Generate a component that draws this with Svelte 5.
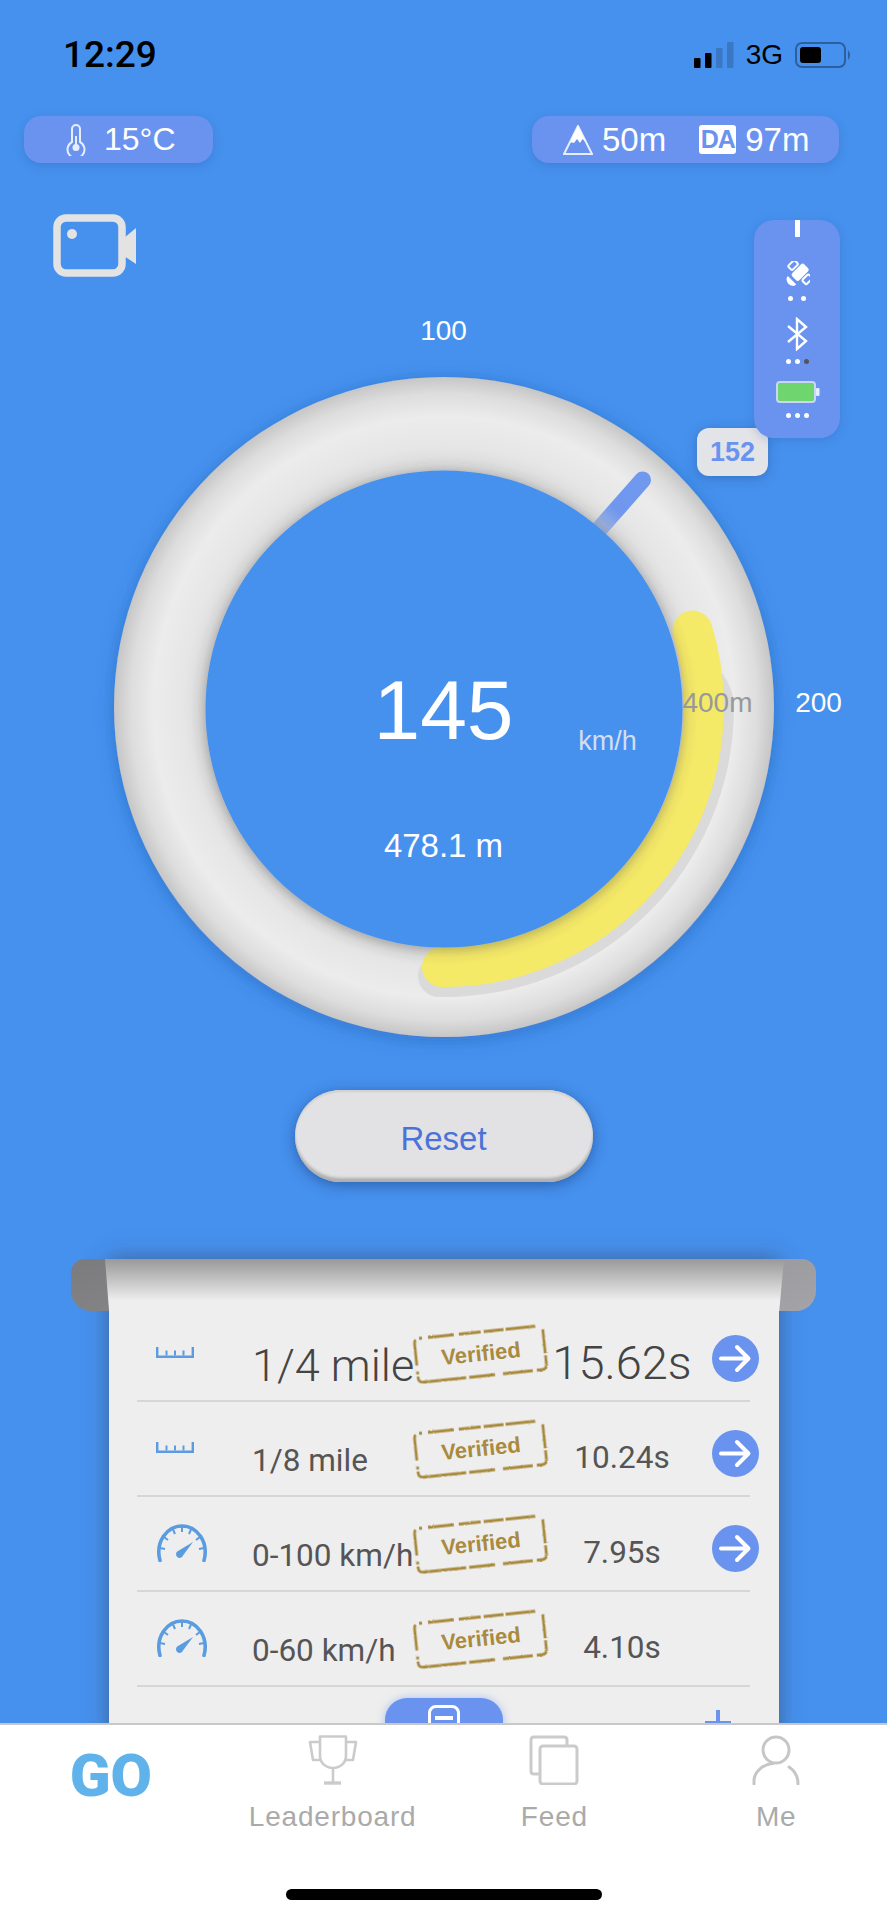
<script>
  const rows = [
    { icon: 'ruler', label: '1/4 mile', time: '15.62s', arrow: true, big: true },
    { icon: 'ruler', label: '1/8 mile', time: '10.24s', arrow: true },
    { icon: 'gauge', label: '0-100 km/h', time: '7.95s', arrow: true },
    { icon: 'gauge', label: '0-60 km/h', time: '4.10s', arrow: false }
  ];
  const ticks = [[4,24,9,25],[8,13,12,16],[17,5.5,19,10],[26,3,26,8],[35,5.5,33,10],[44,13,40,16],[48,24,43,25]];
</script>

<svg class="defs" width="0" height="0" aria-hidden="true">
  <defs>
    <filter id="rough" x="-5%" y="-10%" width="110%" height="120%">
      <feTurbulence type="fractalNoise" baseFrequency="0.5" numOctaves="2" seed="4" result="n" />
      <feDisplacementMap in="SourceGraphic" in2="n" scale="2.2" />
    </filter>
  </defs>
</svg>

<div class="screen">
  <div class="main">
    <header class="status">
      <span class="clock">12:29</span>
      <div class="status-right">
        <svg class="signal" width="40" height="26" viewBox="0 0 40 26">
          <rect x="0" y="16" width="6.5" height="10" rx="1" fill="#000" />
          <rect x="11" y="11" width="6.5" height="15" rx="1" fill="#000" />
          <rect x="22" y="6" width="6.5" height="20" rx="1" fill="#3a78c4" />
          <rect x="33" y="0" width="6.5" height="26" rx="1" fill="#3a78c4" />
        </svg>
        <span class="net">3G</span>
        <svg width="57" height="26" viewBox="0 0 57 26">
          <rect x="1" y="1" width="49" height="24" rx="6" fill="none" stroke="#2c5f9e" stroke-width="2" />
          <rect x="5" y="5" width="21" height="16" rx="3" fill="#000" />
          <path d="M53 8 q4 5 0 10z" fill="#2c5f9e" />
        </svg>
      </div>
    </header>

    <div class="topbar">
      <div class="pill temp">
        <svg width="22" height="32" viewBox="0 0 22 32" fill="none" stroke="#e6edfd" stroke-width="2">
          <path d="M7 18 V5 a4 4 0 0 1 8 0 V18 a8.5 8.5 0 1 1 -8 0z" />
          <circle cx="11" cy="23.5" r="3.5" fill="#e6edfd" stroke="none" />
          <path d="M11 12 V22" />
        </svg>
        <span>15°C</span>
      </div>
      <div class="pill alt">
        <svg width="30" height="30" viewBox="0 0 30 30">
          <path d="M15 1 L29 29 H1z" fill="none" stroke="#e6edfd" stroke-width="2" />
          <path d="M15 1 L23 17 L19.5 14 L17 18 L14 14 L11 18 L7 17z" fill="#fff" />
        </svg>
        <span>50m</span>
        <span class="da">DA</span>
        <span>97m</span>
      </div>
    </div>

    <section class="stage">
      <svg class="camera" width="84" height="64" viewBox="0 0 84 64">
        <rect x="4" y="4" width="65" height="55" rx="9" fill="none" stroke="#e3e3e3" stroke-width="7.5" />
        <circle cx="19" cy="20" r="5" fill="#e3e3e3" />
        <path d="M71 24 L83 14 V50 L71 42z" fill="#e3e3e3" />
      </svg>

      <aside class="panel">
        <i class="tick"></i>
        <svg class="sat" width="26" height="26" viewBox="0 0 26 26">
          <g transform="rotate(45 13 13)" fill="#fff">
            <rect x="9" y="1" width="10" height="17" rx="2.5" />
            <rect x="1" y="5" width="6" height="9" rx="1.5" fill="none" stroke="#fff" stroke-width="2" />
            <rect x="21" y="5" width="6" height="9" rx="1.5" fill="none" stroke="#fff" stroke-width="2" />
            <path d="M8 21 h12 a6 5 0 0 1 -12 0z" />
          </g>
        </svg>
        <div class="dots two"><b></b><b></b></div>
        <svg class="bt" width="22" height="34" viewBox="0 0 22 34" fill="none" stroke="#fff" stroke-width="2.4">
          <path d="M2 9 L20 24 L11 32 V2 L20 10 L2 25" />
        </svg>
        <div class="dots btd"><b></b><b></b><b class="off"></b></div>
        <svg class="batt" width="44" height="22" viewBox="0 0 44 22">
          <rect x="1" y="1" width="38" height="20" rx="3" fill="#6fd66f" stroke="#c9d6f7" stroke-width="2" />
          <rect x="40" y="7" width="3.5" height="8" rx="1" fill="#e6edfd" />
        </svg>
        <div class="dots bad"><b></b><b></b><b></b></div>
      </aside>

      <div class="badge">152</div>

      <div class="gauge">
        <svg width="680" height="680" viewBox="0 0 680 680">
          <defs>
            <radialGradient id="ring" gradientUnits="userSpaceOnUse" cx="340" cy="340" r="330">
              <stop offset="0.72" stop-color="#d8d8d8" />
              <stop offset="0.79" stop-color="#e6e6e6" />
              <stop offset="0.88" stop-color="#ececec" />
              <stop offset="0.95" stop-color="#dddddd" />
              <stop offset="1" stop-color="#c6c6c6" />
            </radialGradient>
            <linearGradient id="needle" gradientUnits="userSpaceOnUse" x1="491" y1="167" x2="538" y2="113">
              <stop offset="0" stop-color="#b4bfd6" />
              <stop offset="0.45" stop-color="#6f97ee" />
              <stop offset="1" stop-color="#7098ee" />
            </linearGradient>
            <filter id="outer" x="-10%" y="-10%" width="120%" height="120%">
              <feDropShadow dx="0" dy="3" stdDeviation="9" flood-color="#1d4c9a" flood-opacity="0.4" />
            </filter>
            <filter id="inner" x="-10%" y="-10%" width="120%" height="120%">
              <feDropShadow dx="0" dy="2" stdDeviation="7" flood-color="#444" flood-opacity="0.45" />
            </filter>
          </defs>
          <circle cx="340" cy="340" r="330" fill="url(#ring)" filter="url(#outer)" />
          <path d="M618 306 Q630 322 630 340 A290 290 0 0 1 335 630 A21 21 0 0 1 335 588 L500 400z" fill="#dadada" />
          <path d="M588.5 263.6 A260 260 0 0 1 338 600" fill="none" stroke="#f5e968" stroke-width="40" stroke-linecap="round" />
          <line x1="491" y1="167" x2="538.5" y2="113" stroke="url(#needle)" stroke-width="17" stroke-linecap="round" />
          <circle cx="340" cy="342" r="238.5" fill="#4691ee" filter="url(#inner)" />
        </svg>
        <span class="mark m100">100</span>
        <span class="mark m200">200</span>
        <span class="m400">400m</span>
        <span class="speed">145</span>
        <span class="unit">km/h</span>
        <span class="dist">478.1 m</span>
      </div>

      <button class="reset"><span>Reset</span></button>
    </section>

    <section class="sheet">
      <div class="roll"></div>
      <div class="paper">
        <div class="curl"></div>
        <div class="rows">
          {#each rows as r}
            <div class="row" class:big={r.big}>
              <div class="ic">
                {#if r.icon === 'ruler'}
                  <svg width="38" height="11" viewBox="0 0 38 11" fill="#5b9be0">
                    <path d="M0 0 H2.4 V8.4 H35.6 V0 H38 V11 H0z" />
                    <rect x="9.5" y="3.5" width="2" height="5" />
                    <rect x="18" y="3.5" width="2" height="5" />
                    <rect x="26.5" y="3.5" width="2" height="5" />
                  </svg>
                {:else}
                  <svg width="52" height="38" viewBox="0 0 52 38" fill="none" stroke="#5b9be0">
                    <path d="M4 36.5 C-1 18 11 2 26 2 C41 2 53 18 48 36.5" stroke-width="3.6" stroke-linecap="round" />
                    {#each ticks as t}
                      <line x1={t[0]} y1={t[1]} x2={t[2]} y2={t[3]} stroke-width="2" />
                    {/each}
                    <path d="M37 18 L27 31.5 a3.6 3.6 0 1 1 -5 -4.4z" fill="#5b9be0" stroke="none" />
                  </svg>
                {/if}
              </div>
              <span class="label">{r.label}</span>
              <div class="stamp">
                <svg width="136" height="62" viewBox="0 0 136 62" fill="none" stroke="#a98a3e" stroke-width="2.8" filter="url(#rough)">
                  <path d="M8 9 H127 Q132 9 132 14 V48 Q132 53 127 53 H8 Q3 53 3 48 V14 Q3 9 8 9z" stroke-dasharray="3 6 26 5 22 3 20 2 30 9 24 2 22 4 30 8 26 3 52 2" />
                </svg>
                <span>Verified</span>
              </div>
              <span class="time">{r.time}</span>
              {#if r.arrow}
                <span class="go">
                  <svg width="47" height="47" viewBox="0 0 47 47" fill="none" stroke="#fff" stroke-width="4" stroke-linecap="round" stroke-linejoin="round">
                    <path d="M9 23.5 H36 M25 12 L36.5 23.5 L25 35" />
                  </svg>
                </span>
              {/if}
            </div>
          {/each}
          <div class="actions">
            <div class="log"><i></i></div>
            <div class="plus"></div>
          </div>
        </div>
      </div>
    </section>
  </div>

  <nav class="tabs">
    <div class="tab"><span class="gobtn">GO</span></div>
    <div class="tab">
      <svg width="50" height="50" viewBox="0 0 50 50" fill="none" stroke="#cbcbcb" stroke-width="2.6" stroke-linejoin="round">
        <path d="M12 1.5 H38 V21 C38 28 32 33 25 33 C18 33 12 28 12 21z" />
        <path d="M12 7 H2 L5 25 H13 M38 7 H48 L45 25 H37" />
        <path d="M25 33 V47" />
        <path d="M16 48 H33" stroke-width="3.4" />
      </svg>
      <span>Leaderboard</span>
    </div>
    <div class="tab">
      <svg width="50" height="50" viewBox="0 0 50 50" fill="none" stroke="#cbcbcb" stroke-width="3" stroke-linejoin="round">
        <path d="M38 10 V5 Q38 2 35 2 H5 Q2 2 2 5 V36 Q2 39 5 39 H10" />
        <rect x="11" y="11" width="37" height="38" rx="3" />
      </svg>
      <span>Feed</span>
    </div>
    <div class="tab">
      <svg width="50" height="50" viewBox="0 0 50 50" fill="none" stroke="#c6c6c6" stroke-width="3" stroke-linecap="round">
        <circle cx="25" cy="15" r="13" />
        <path d="M3 49 V46 C3 37 12 29 22 28.5 M38 32 C44 36 47 42 47 49" />
      </svg>
      <span>Me</span>
    </div>
    <i class="home"></i>
  </nav>
</div>

<style>
  :global(body) {
    margin: 0;
    background: #4691ee;
  }
  .defs {
    position: absolute;
  }
  .screen {
    width: 887px;
    height: 1920px;
    display: flex;
    flex-direction: column;
    overflow: hidden;
    background: #4691ee;
    font-family: "Liberation Sans", Arial, sans-serif;
    color: #fff;
  }
  .main {
    flex: 1;
    min-height: 0;
    overflow: hidden;
  }
  .status {
    height: 116px;
    box-sizing: border-box;
    padding: 35px 35px 0 63px;
    display: flex;
    justify-content: space-between;
    align-items: flex-start;
  }
  .clock {
    font: 500 37px/40px Roboto, sans-serif;
    color: #000;
  }
  .status-right {
    display: flex;
    align-items: center;
    gap: 12px;
    height: 40px;
    color: #000;
  }
  .net {
    font-size: 28px;
  }
  .topbar {
    display: flex;
    justify-content: space-between;
    padding: 0 48px 0 24px;
  }
  .pill {
    height: 47px;
    box-sizing: border-box;
    border-radius: 17px;
    background: #6a93ef;
    box-shadow: 0 3px 10px rgba(40, 80, 160, 0.25);
    display: flex;
    align-items: center;
    font-size: 33px;
  }
  .temp {
    width: 189px;
    padding-left: 41px;
    gap: 17px;
    font-size: 32px;
  }
  .alt {
    width: 307px;
    padding-left: 31px;
    gap: 9px;
  }
  .da {
    margin-left: 24px;
    background: #fff;
    color: #6a93ef;
    font-size: 25px;
    font-weight: 700;
    width: 37px;
    height: 29px;
    line-height: 29px;
    text-align: center;
    border-radius: 3px;
    letter-spacing: -1px;
  }
  .stage {
    position: relative;
    padding-top: 204px;
  }
  .camera {
    position: absolute;
    left: 53px;
    top: 51px;
  }
  .panel {
    position: absolute;
    z-index: 3;
    left: 754px;
    top: 57px;
    width: 86px;
    height: 218px;
    border-radius: 20px;
    background: #6a93ef;
    box-shadow: 0 2px 10px rgba(40, 80, 160, 0.25);
    display: flex;
    flex-direction: column;
    align-items: center;
  }
  .tick {
    width: 5px;
    height: 17px;
    background: #fff;
  }
  .sat {
    margin-top: 24px;
  }
  .panel .dots {
    display: flex;
    gap: 4px;
    margin-top: 8px;
  }
  .panel .dots.two {
    gap: 8px;
    margin-top: 9px;
  }
  .panel .dots.bad {
    margin-top: 10px;
  }
  .dots b {
    width: 5px;
    height: 5px;
    border-radius: 50%;
    background: #fff;
  }
  .dots b.off {
    background: #555;
  }
  .bt {
    margin-top: 16px;
  }
  .batt {
    margin-top: 17px;
    margin-left: 1px;
  }
  .badge {
    position: absolute;
    z-index: 2;
    left: 697px;
    top: 265px;
    width: 71px;
    height: 48px;
    border-radius: 12px;
    background: #e3e4e8;
    box-shadow: 0 2px 12px rgba(30, 60, 120, 0.35);
    color: #6a93ef;
    font-size: 27px;
    font-weight: 700;
    text-align: center;
    line-height: 48px;
  }
  .gauge {
    position: relative;
    width: 680px;
    height: 680px;
    margin: 0 auto;
  }
  .gauge > svg {
    display: block;
    overflow: visible;
  }
  .gauge span {
    position: absolute;
    transform: translate(-50%, -50%);
    white-space: nowrap;
    line-height: 1;
  }
  .mark {
    font-size: 28px;
  }
  .m100 {
    left: 340px;
    top: -36px;
  }
  .m200 {
    left: 715px;
    top: 336px;
  }
  .m400 {
    left: 614px;
    top: 336px;
    font-size: 28px;
    color: #999;
  }
  .speed {
    left: 340px;
    top: 343px;
    font-size: 84px;
  }
  .unit {
    left: 504px;
    top: 374px;
    font-size: 27px;
    color: #d3deef;
  }
  .dist {
    left: 340px;
    top: 478px;
    font-size: 33px;
  }
  .reset {
    display: block;
    width: 298px;
    height: 92px;
    margin: 43px auto 0;
    padding: 6px 0 0;
    border: none;
    border-radius: 46px;
    background: #e2e2e4;
    box-shadow: inset 0 -5px 3px -1px #aeaeae, inset 0 2px 2px #cfcfcf, 0 3px 14px rgba(20, 50, 110, 0.5);
    color: #4a72d8;
    font: 33px "Liberation Sans", Arial, sans-serif;
  }
  .sheet {
    position: relative;
    margin: 77px 71px 0;
  }
  .roll {
    position: absolute;
    z-index: 1;
    inset: 0 0 auto 0;
    height: 52px;
    border-radius: 14px 14px 20px 20px;
    background: linear-gradient(160deg, #7b7b7e, #a4a4a8);
  }
  .paper {
    position: relative;
    margin: 0 37px 0 38px;
    height: 480px;
    background: #eee;
    box-shadow: 0 0 20px rgba(50, 50, 60, 0.5);
  }
  .curl {
    position: absolute;
    z-index: 2;
    left: -4px;
    right: -5px;
    top: 0;
    height: 52px;
    clip-path: polygon(0 0, 100% 0, 99.3% 100%, 0.6% 100%);
    background: linear-gradient(#999 0, #c8c8c8 45%, #eee 80%);
  }
  .rows {
    position: relative;
    z-index: 3;
    margin: 0 29px 0 28px;
    padding-top: 48px;
    color: #555;
  }
  .row {
    height: 95px;
    box-sizing: border-box;
    border-bottom: 2px solid #d6d6d6;
    display: grid;
    grid-template-columns: 116px 160px 135px 148px 53px;
    align-items: center;
    font: 31.5px Roboto, sans-serif;
  }
  .row.big {
    font-size: 45px;
    font-weight: 300;
    color: #444;
  }
  .row.big .time {
    font-size: 47px;
  }
  .ic {
    padding-left: 19px;
    padding-bottom: 2px;
    display: flex;
  }
  .label {
    white-space: nowrap;
    padding-top: 24px;
    margin-left: -1px;
  }
  .time {
    text-align: center;
    padding-top: 17px;
  }
  .stamp {
    position: relative;
    width: 136px;
    height: 62px;
    display: flex;
    align-items: center;
    justify-content: center;
    transform: rotate(-6deg);
  }
  .stamp svg {
    position: absolute;
    inset: 0;
  }
  .stamp span {
    font: 700 22px "Liberation Sans", Arial, sans-serif;
    color: #a98a3e;
  }
  .go {
    width: 47px;
    height: 47px;
    margin: 10px 0 0 16px;
    border-radius: 50%;
    background: #6a93ef;
    display: block;
  }
  .go svg {
    display: block;
  }
  .actions {
    display: flex;
    padding-top: 11px;
  }
  .log {
    width: 118px;
    height: 60px;
    margin-left: 248px;
    border-radius: 22px 22px 0 0;
    background: #6a93ef;
    box-shadow: 0 0 8px rgba(106, 147, 239, 0.5);
    display: flex;
    justify-content: center;
    padding-top: 7px;
    box-sizing: border-box;
  }
  .log i {
    width: 32px;
    height: 40px;
    box-sizing: border-box;
    border: 3.5px solid #fff;
    border-radius: 8px;
    background: linear-gradient(#fff, #fff) center 8px / 18px 4px no-repeat;
  }
  .plus {
    width: 26px;
    height: 26px;
    margin: 12px 0 0 202px;
    background:
      linear-gradient(#6a93ef, #6a93ef) center / 4px 100% no-repeat,
      linear-gradient(#6a93ef, #6a93ef) center / 100% 5px no-repeat;
  }
  .tabs {
    position: relative;
    height: 197px;
    flex: none;
    box-sizing: border-box;
    background: #fff;
    border-top: 2px solid #c8c8c8;
    display: grid;
    grid-template-columns: repeat(4, 1fr);
  }
  .tab {
    display: flex;
    flex-direction: column;
    align-items: center;
    padding-top: 10px;
    gap: 16px;
    color: #aaa;
    font-size: 28px;
    line-height: 32px;
    letter-spacing: 0.8px;
  }
  .tab svg {
    display: block;
    flex: none;
  }
  .gobtn {
    font: 900 60px/70px Roboto, sans-serif;
    letter-spacing: 0;
    color: #60b3ea;
    padding-top: 6px;
  }
  .home {
    position: absolute;
    left: 286px;
    top: 164px;
    width: 316px;
    height: 11px;
    border-radius: 6px;
    background: #000;
  }
</style>
